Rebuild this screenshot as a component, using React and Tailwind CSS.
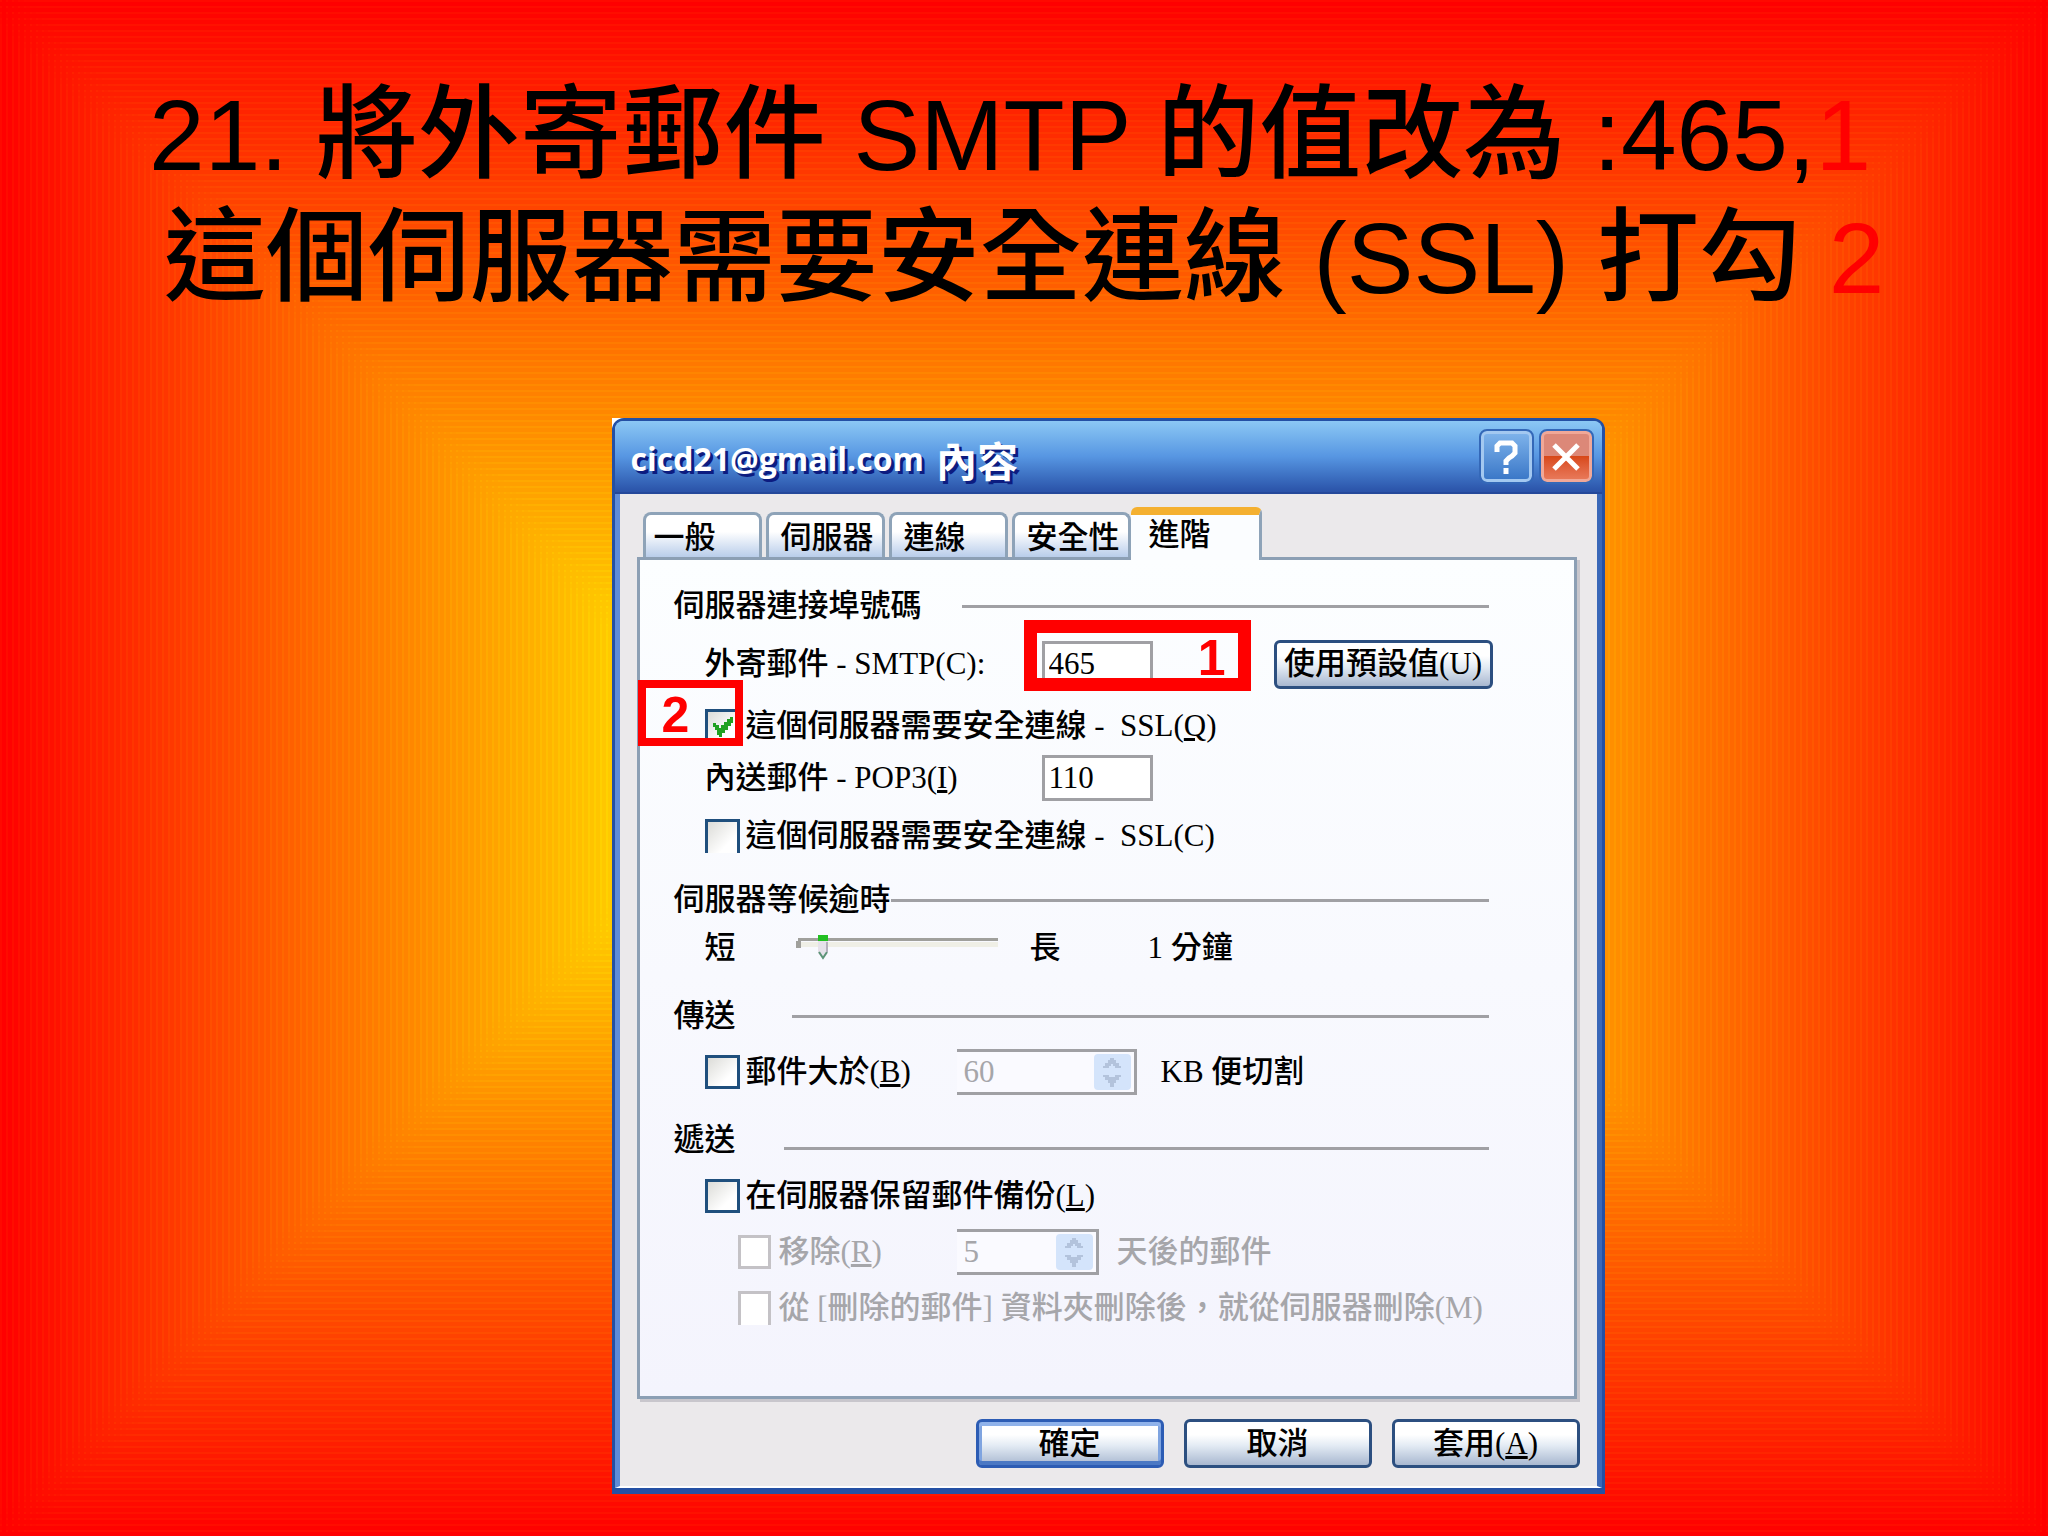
import React from "react";

const font = "font-['Liberation_Serif','Noto_Sans_CJK_TC',serif]";

// Fine bands, six pixels each, running from red at the edges to yellow inside.
const BAND = 6;
const BANDS = 128;

function bandedGradient(direction) {
  const near = [];
  const far = [];
  for (let i = 0; i < BANDS; i += 1) {
    const green = Math.round((255 * i) / BANDS);
    const start = i * BAND;
    const line = `rgb(255 ${Math.min(255, green + 9)} 0)`;
    const fill = `rgb(255 ${green} 0)`;
    near.push(`${line} ${start}px ${start + 2}px`, `${fill} ${start + 2}px ${start + BAND}px`);
    far.unshift(
      `${fill} calc(100% - ${start + BAND}px) calc(100% - ${start + 2}px)`,
      `${line} calc(100% - ${start + 2}px) calc(100% - ${start}px)`
    );
  }
  return `linear-gradient(${direction}, ${near.concat(far).join(", ")})`;
}

const backdrop = `${bandedGradient("to right")}, ${bandedGradient("to bottom")}`;

function Heading({ children, rule, className = "" }) {
  return (
    <div className={`flex h-12 items-center pl-[34px] ${className}`}>
      <h2 className="shrink-0">{children}</h2>
      <div className={`h-[3px] flex-1 bg-[#a0a0a4] ${rule}`} />
    </div>
  );
}

function Tick({ id, open, disabled, ...props }) {
  const look = disabled
    ? "border-[#c4c2c6] bg-white"
    : "border-[#1f4f7d] bg-linear-to-br from-[#dcdcd8] to-white to-70%";
  return (
    <span className={`relative block h-[34px] shrink-0 ${disabled ? "w-[33px]" : "w-[35px]"}`}>
      <input
        id={id}
        type="checkbox"
        disabled={disabled}
        className={`peer block size-full appearance-none border-3 ${open ? "border-b-0" : ""} ${look}`}
        {...props}
      />
      <svg
        viewBox="0 0 20 20"
        className="pointer-events-none absolute top-2 left-2 hidden size-5 peer-checked:block"
      >
        <path d="M0 6h3v2h3v3h2V8h3V5h3V2h3V0h3v6h-2v3h-3v4h-3v3h-3v3H9v1H6v-2H4v-5H2v-3H0z" fill="#21a121" />
      </svg>
    </span>
  );
}

function Spinner({ label, value, className }) {
  return (
    <div className={`flex h-[46px] shrink-0 items-center border-y-3 border-r-3 border-[#a0a0a4] bg-[#fafaff] p-[3px] ${className}`}>
      <input
        aria-label={label}
        defaultValue={value}
        disabled
        className="h-9 w-0 min-w-0 flex-1 bg-transparent pl-1 leading-9 text-[#a6a6aa]"
      />
      <div className="flex h-9 w-[37px] flex-col rounded-sm bg-[#d4e4fb]">
        <button type="button" disabled aria-label="+" className="flex flex-1 items-center justify-center">
          <svg viewBox="0 0 20 10" className="h-2.5 w-5"><path d="M8 0h4v2h2v3h3v3h2v2h-6V8h-2V6H9v2H7v2H1V8h2V5h3V2h2z" fill="#b3c3dc" /></svg>
        </button>
        <button type="button" disabled aria-label="-" className="flex flex-1 items-center justify-center">
          <svg viewBox="0 0 20 12" className="h-3 w-5"><path d="M1 0h6v2h6V0h6v2h-2v3h-3v3h-2v4H8V8H6V5H3V2H1z" fill="#b3c3dc" /></svg>
        </button>
      </div>
    </div>
  );
}

function Tab({ children, className = "" }) {
  return (
    <button
      type="button"
      role="tab"
      aria-selected="false"
      className={`flex h-[45px] w-[119px] shrink-0 items-center rounded-t-lg border-3 border-b-0 border-[#8ea3b8] bg-linear-to-b from-white from-40% to-[#b9cdea] pt-1 font-medium ${className}`}
    >
      {children}
    </button>
  );
}

function PushButton({ children, className = "" }) {
  return (
    <button
      type="button"
      className={`flex h-[49px] items-center justify-center rounded-md border-3 border-[#2c4f80] bg-linear-to-b from-white from-30% via-[#e3ebf4] via-55% to-[#a9b8d0] font-medium ${className}`}
    >
      {children}
    </button>
  );
}

function Marker({ children, className }) {
  return (
    <div
      className={`pointer-events-none absolute flex items-center border-[#ff0000] pt-1 font-['Liberation_Sans',sans-serif] text-[50px] leading-none font-bold text-[#ff0000] ${className}`}
    >
      {children}
    </div>
  );
}

function Cjk({ children }) {
  return <span className="text-[102px] font-medium">{children}</span>;
}

export default function App() {
  return (
    <main className="min-h-screen bg-blend-darken pt-[74px] pb-11" style={{ backgroundImage: backdrop }}>
      <h1 className="text-center font-['Liberation_Sans','Noto_Sans_CJK_TC',sans-serif] text-[100px] leading-[123px] whitespace-pre text-black">
        <span className="block h-[123px]">
          21. <Cjk>將外寄郵件</Cjk> SMTP <Cjk>的值改為</Cjk> :465,<span className="text-[#ff0000]">1 </span>
        </span>
        <span className="block h-[123px]">
          <Cjk>這個伺服器需要安全連線</Cjk> (SSL) <Cjk>打勾</Cjk> <span className="text-[#ff0000]">2</span>
        </span>
      </h1>

      <div className="mt-[98px] flex justify-center pl-[168px]">
        <div className="w-full max-w-[993px] bg-[linear-gradient(#fff,#fff)] bg-[size:14px_14px] bg-no-repeat">
          <section
            aria-label="cicd21@gmail.com 內容"
            className={`flex flex-col rounded-t-xl border-3 border-b-6 border-[#2450a4] bg-[#ebe9eb] text-[31px] leading-[46px] font-medium text-black ${font}`}
          >
            <header className="flex h-[73px] items-center gap-[9px] rounded-t-lg border-b-2 border-[#24489a] bg-linear-to-b from-[#8cc8f4] via-[#5796e2] via-50% to-[#2a52a8] pr-2.5 pl-4">
              <div className="flex flex-1 items-center gap-3 pt-1 font-bold text-white [text-shadow:3px_3px_0_#0c1c80]">
                <span className="font-['Open_Sans',sans-serif] text-[32px]">cicd21@gmail.com</span>
                <span className="font-['Noto_Sans_CJK_TC',sans-serif] text-[41px]">內容</span>
              </div>
              <button
                type="button"
                aria-label="?"
                className="flex size-[51px] items-center justify-center rounded-md border-3 border-[#a3c8f0] bg-linear-to-b from-[#7db2ea] to-[#3b78c8] outline-2 outline-[#3468b8]"
              >
                <svg viewBox="0 0 24 34" className="h-[34px] w-6" fill="none" stroke="#fff" strokeWidth="5">
                  <path d="M3 12V6l3-3h12l3 3v7l-3 3-3 2-3 3v4" />
                  <path d="M12 28v6" />
                </svg>
              </button>
              <button
                type="button"
                aria-label="×"
                className="flex size-[51px] items-center justify-center rounded-md border-3 border-[#f0a898] bg-linear-to-b from-[#dc8878] from-50% via-[#d84818] via-50% to-[#e87858] outline-2 outline-[#3468b8]"
              >
                <svg viewBox="0 0 28 28" className="size-7">
                  <path d="M2 2l24 24M26 2L2 26" stroke="#fff" strokeWidth="5" />
                </svg>
              </button>
            </header>

            <div className="flex flex-col border-x-5 border-b-2 border-l-[#5f8cd8] border-r-[#3a68b8] border-b-white pt-[13px] pr-5 pb-[18px] pl-[17px]">
              <div role="tablist" className="flex items-end pl-[6px]">
                <Tab className="mr-1 pl-2">一般</Tab>
                <Tab className="mr-1 pl-3">伺服器</Tab>
                <Tab className="mr-1 pl-3">連線</Tab>
                <Tab className="pl-3">安全性</Tab>
                <button
                  type="button"
                  role="tab"
                  aria-selected="true"
                  className="relative z-10 -mb-[3px] flex h-[53px] w-[131px] items-start rounded-t-md border-t-8 border-r-3 border-t-[#f4b030] border-r-[#8ea3b8] bg-[#fbfdff] pl-[18px] font-medium"
                >
                  <span className="-mt-[3px]">進階</span>
                </button>
              </div>

              <form
                onSubmit={(e) => e.preventDefault()}
                className="border-3 border-[#8c9fb4] bg-linear-to-b from-[#fcfeff] to-[#f4f4fd] pt-[22px] pr-[85px] pb-16 shadow-[3px_3px_0_#c8c6cc]"
              >
                <Heading rule="ml-10">伺服器連接埠號碼</Heading>

                <div className="relative mt-2.5 flex h-12 items-center pl-[65px]">
                  <label htmlFor="smtp" className="w-[337px] shrink-0">外寄郵件 - SMTP(C):</label>
                  <input id="smtp" defaultValue="465" className="h-[46px] w-[111px] border-3 border-[#a0a0a4] bg-white pl-1 leading-10" />
                  <PushButton className="-mr-1 ml-auto w-[219px] whitespace-nowrap">使用預設值(U)</PushButton>
                  <Marker className="-top-5 left-[384px] h-[71px] w-[227px] justify-end border-13 pr-3">1</Marker>
                </div>

                <div className="relative mt-3.5 flex h-12 items-center gap-[6px] pl-[65px]">
                  <Tick id="ssl-out" defaultChecked />
                  <label htmlFor="ssl-out" className="whitespace-pre">
                    這個伺服器需要安全連線 -  SSL(<u>Q</u>)
                  </label>
                  <Marker className="-top-[22px] -left-[2px] h-[66px] w-[105px] border-8 pl-4">2</Marker>
                </div>

                <div className="mt-1 flex h-12 items-center pl-[65px]">
                  <label htmlFor="pop" className="w-[337px] shrink-0">
                    內送郵件 - POP3(<u>I</u>)
                  </label>
                  <input id="pop" defaultValue="110" className="h-[46px] w-[111px] border-3 border-[#a0a0a4] bg-white pl-1 leading-10" />
                </div>

                <div className="mt-2.5 flex h-12 items-center gap-[6px] pl-[65px]">
                  <Tick id="ssl-in" open />
                  <label htmlFor="ssl-in" className="whitespace-pre">這個伺服器需要安全連線 -  SSL(C)</label>
                </div>

                <Heading className="mt-4" rule="">伺服器等候逾時</Heading>

                <div className="flex h-12 items-center pl-[65px]">
                  <span className="w-[91px]">短</span>
                  <div className="relative h-7 w-[202px]">
                    <input
                      type="range"
                      aria-label="伺服器等候逾時"
                      min="0"
                      max="9"
                      defaultValue="1"
                      className="absolute inset-0 size-full opacity-0"
                    />
                    <svg viewBox="0 0 202 28" className="pointer-events-none absolute inset-0 size-full">
                      <path d="M4 8h198v5H4z" fill="#efefe6" />
                      <path d="M2 4h200v3H5v7H0V7h2z" fill="#a0a09c" />
                      <path d="M22 5h10v14l-5 6-5-6z" fill="#e6e2ea" />
                      <path d="M22 1h10v6H22z" fill="#22c022" />
                      <path d="M23 18l4 6 4-6" fill="none" stroke="#5d9478" strokeWidth="2" />
                      <path d="M31 8v10" fill="none" stroke="#b4b0bc" strokeWidth="2" />
                    </svg>
                  </div>
                  <span className="ml-8 w-[118px]">長</span>
                  <span>1 分鐘</span>
                </div>

                <Heading className="mt-5" rule="ml-14">傳送</Heading>

                <div className="mt-2 flex h-12 items-center pl-[65px]">
                  <Tick id="split" />
                  <label htmlFor="split" className="w-[217px] shrink-0 pl-[6px]">
                    郵件大於(<u>B</u>)
                  </label>
                  <Spinner label="KB" value="60" className="w-[180px]" />
                  <span className="ml-6 whitespace-nowrap">KB 便切割</span>
                </div>

                <Heading className="mt-5" rule="mt-4 ml-12">遞送</Heading>

                <div className="mt-2 flex h-12 items-center gap-[6px] pl-[65px]">
                  <Tick id="keep" />
                  <label htmlFor="keep">
                    在伺服器保留郵件備份(<u>L</u>)
                  </label>
                </div>

                <div className="mt-2 flex h-12 items-center pl-[98px] text-[#a6a6aa]">
                  <Tick id="remove" disabled />
                  <label htmlFor="remove" className="w-[186px] shrink-0 pl-2">
                    移除(<u>R</u>)
                  </label>
                  <Spinner label="天" value="5" className="w-[142px]" />
                  <span className="ml-[18px] whitespace-nowrap">天後的郵件</span>
                </div>

                <div className="mt-2 flex h-12 items-center pl-[98px] text-[#a6a6aa]">
                  <Tick id="purge" open disabled />
                  <label htmlFor="purge" className="pl-2 whitespace-nowrap">
                    從 [刪除的郵件] 資料夾刪除後，就從伺服器刪除(M)
                  </label>
                </div>
              </form>

              <div className="-mr-[3px] mt-5 flex justify-end gap-5">
                <PushButton className="w-[188px] border-[#2c5cb4] shadow-[inset_0_4px_0_#8fb2ea,inset_0_-4px_0_#4a78c4,inset_3px_0_0_#7fa4e0,inset_-3px_0_0_#7fa4e0]">確定</PushButton>
                <PushButton className="w-[188px]">取消</PushButton>
                <PushButton className="w-[188px]">
                  <span>套用(<u>A</u>)</span>
                </PushButton>
              </div>
            </div>
          </section>
        </div>
      </div>
    </main>
  );
}
